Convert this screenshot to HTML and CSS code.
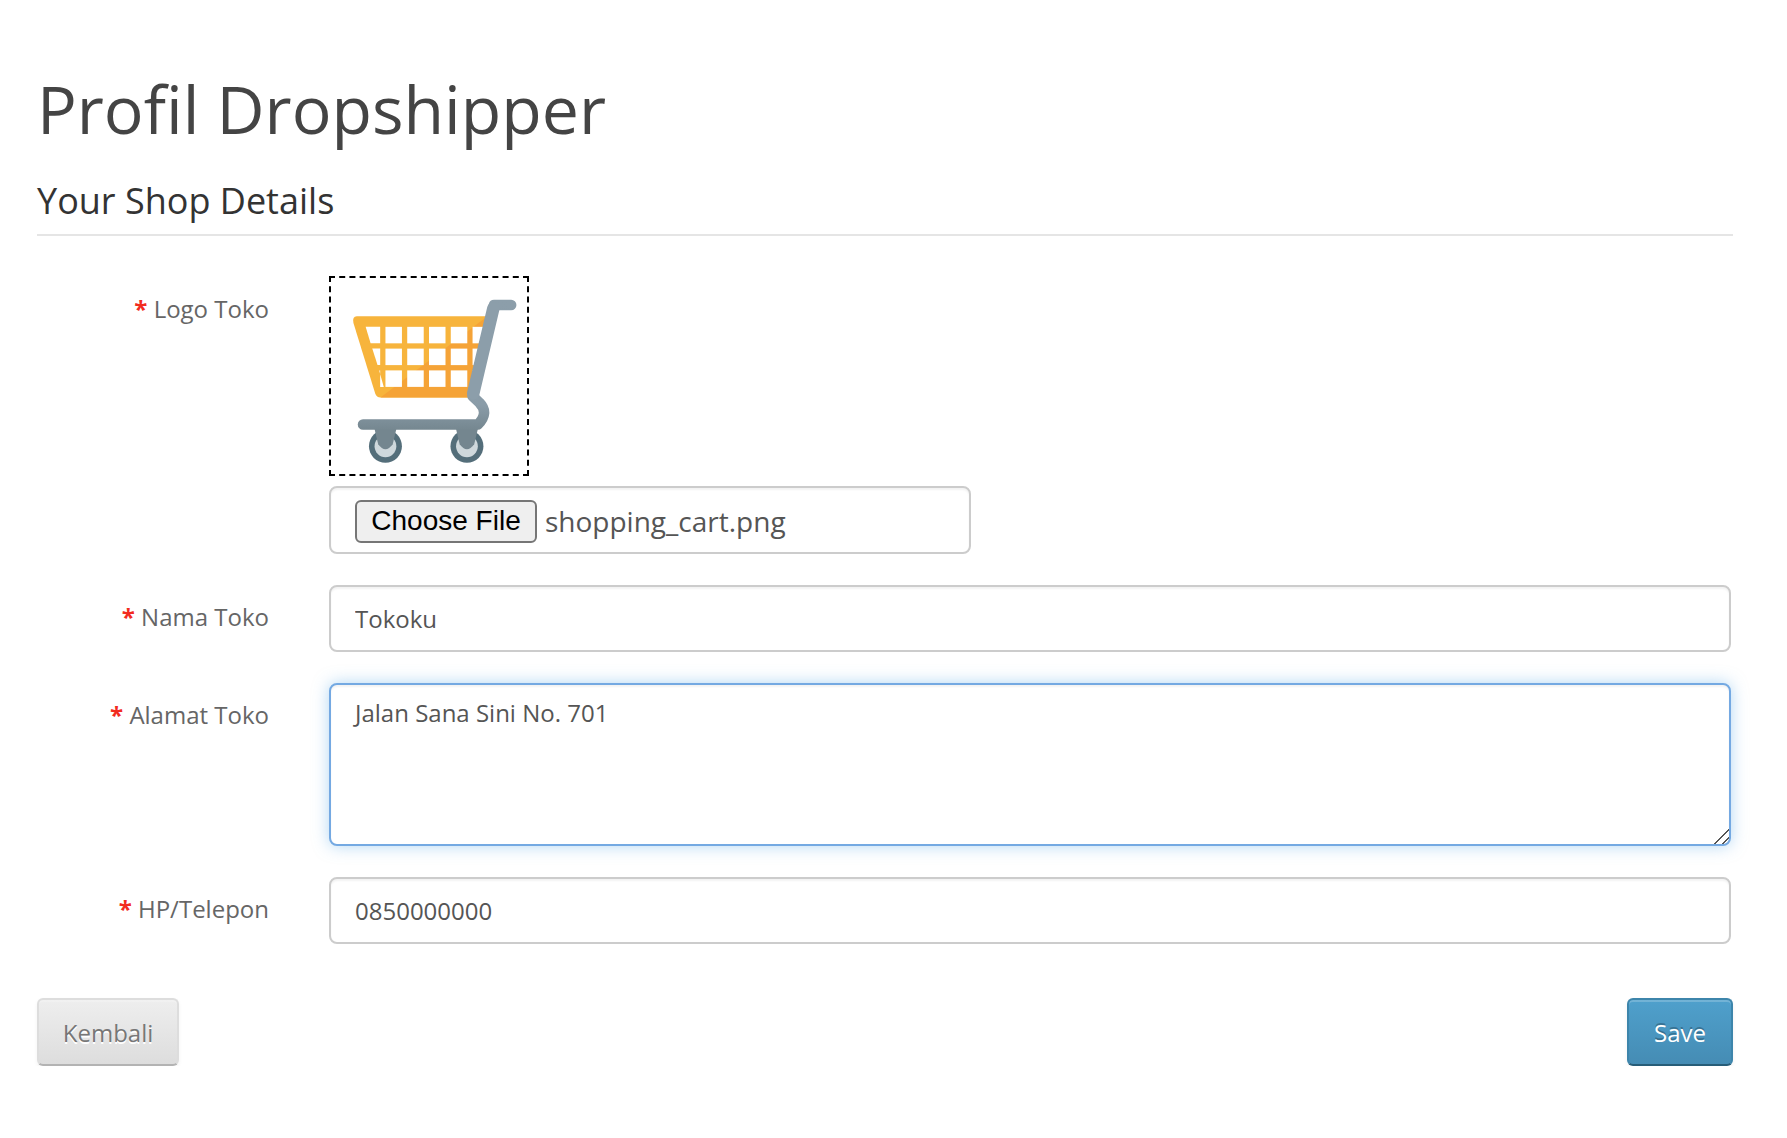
FILE: index.html
```html
<!DOCTYPE html>
<html lang="id">
<head>
<meta charset="utf-8">
<title>Profil Dropshipper</title>
<link rel="stylesheet" href="styles.css">
</head>
<body>
<main class="page">
  <h1 class="title">Profil Dropshipper</h1>
  <form class="form">
    <h2 class="legend">Your Shop Details</h2>
    <div class="row">
      <label class="label"><span class="req">*</span> Logo Toko</label>
      <div class="field logo-field">
        <div class="logo-box">
          <svg class="cart" viewBox="30 36 594 594" aria-hidden="true">
            <defs>
              <linearGradient id="steel" gradientUnits="userSpaceOnUse" x1="0" y1="100" x2="0" y2="500">
                <stop offset="0" stop-color="#8c9eaa"/>
                <stop offset=".8" stop-color="#8a9ca8"/>
                <stop offset="1" stop-color="#74868f"/>
              </linearGradient>
            </defs>
            <path fill="#f7b43c" d="M108 152H505L450 398H180Q168 398 164 386L98 172Q94 152 108 152Z"/>
            <path fill="#f5a337" d="M505 152L450 398H180L480 170Z"/>
            <g fill="#fff">
              <path d="M135 184H179V234H150Z"/>
              <path d="M155 250H179V300H171Z"/>
              <path d="M176 316H179V366H190Z" />
              <rect x="195" y="184" width="50" height="50"/><rect x="261" y="184" width="50" height="50"/><rect x="327" y="184" width="50" height="50"/><rect x="393" y="184" width="50" height="50"/><rect x="459" y="184" width="40" height="50"/>
              <rect x="195" y="250" width="50" height="50"/><rect x="261" y="250" width="50" height="50"/><rect x="327" y="250" width="50" height="50"/><rect x="393" y="250" width="50" height="50"/><rect x="459" y="250" width="30" height="50"/>
              <rect x="195" y="316" width="50" height="50"/><rect x="261" y="316" width="50" height="50"/><rect x="327" y="316" width="50" height="50"/><rect x="393" y="316" width="50" height="50"/><rect x="459" y="316" width="20" height="50"/>
            </g>
            <circle cx="195" cy="546" r="50" fill="#546e7a"/>
            <circle cx="195" cy="546" r="33" fill="#cfd8dc"/>
            <circle cx="442" cy="546" r="50" fill="#546e7a"/>
            <circle cx="442" cy="546" r="33" fill="#cfd8dc"/>
            <path fill="#74868f" d="M160 485H230L217 540Q195 570 173 540Z"/>
            <path fill="#74868f" d="M407 485H477L464 540Q442 570 420 540Z"/>
            <path fill="none" stroke="url(#steel)" stroke-width="32" stroke-linecap="round" stroke-linejoin="round" d="M576 118H524L459 394L480 414Q510 445 475 480H127"/>
            <path fill="none" stroke="#8c9eaa" stroke-width="38" stroke-linecap="round" d="M522 128L461 386"/>
          </svg>
        </div>
        <div class="control file-control">
          <button type="button" class="file-btn">Choose File</button>
          <span class="file-name">shopping_cart.png</span>
        </div>
      </div>
    </div>
    <div class="row">
      <label class="label label-input" for="nama"><span class="req">*</span> Nama Toko</label>
      <div class="field"><input id="nama" class="control text-input" type="text" value="Tokoku"></div>
    </div>
    <div class="row">
      <label class="label label-input" for="alamat"><span class="req">*</span> Alamat Toko</label>
      <div class="field"><textarea id="alamat" class="control text-area">Jalan Sana Sini No. 701</textarea></div>
    </div>
    <div class="row">
      <label class="label label-input" for="hp"><span class="req">*</span> HP/Telepon</label>
      <div class="field"><input id="hp" class="control text-input" type="text" value="0850000000"></div>
    </div>
    <div class="actions">
      <a class="btn btn-default">Kembali</a>
      <button type="button" class="btn btn-primary">Save</button>
    </div>
  </form>
</main>
</body>
</html>
```

FILE: styles.css
```css
* { box-sizing: border-box; }
html, body { margin: 0; background: #fff; }
body {
  font-family: "Open Sans", sans-serif;
  color: #666;
  font-size: 24px;
}
.page { padding: 64px 54px 0 37px; }
.title {
  margin: 0;
  font-size: 66.2px;
  line-height: 88px;
  font-weight: 400;
  color: #444;
}
.legend {
  margin: 25px 0 0;
  height: 59px;
  font-size: 36px;
  line-height: 48px;
  font-weight: 400;
  color: #333;
  border-bottom: 2px solid #e5e5e5;
}
.form { display: flex; flex-direction: column; }
.row { display: flex; margin-top: 31px; padding-right: 2px; }
.row:nth-of-type(1) { margin-top: 40px; }
.label {
  width: 292px;
  flex: none;
  padding-right: 60px;
  text-align: right;
  line-height: 34px;
  color: #666;
}
.row:nth-of-type(1) .label { padding-top: 16px; }
.label-input { padding-top: 15px; }
.req { color: #f22c1f; font-weight: 700; }
.field { flex: 1; min-width: 0; }
.logo-box {
  width: 200px;
  height: 200px;
  border: 2px dashed #000;
  background: #fff;
}
.cart { display: block; width: 196px; height: 196px; }
.control {
  display: block;
  width: 100%;
  font-family: "Open Sans", sans-serif;
  font-size: 24px;
  color: #555;
  background: #fff;
  border: 2px solid #ccc;
  border-radius: 8px;
  outline: none;
  box-shadow: inset 0 2px 2px rgba(0,0,0,.05);
}
.text-input {
  height: 67px;
  padding: 0 24px;
}
.text-area {
  height: 163px;
  padding: 11px 24px;
  line-height: 34px;
  resize: vertical;
  border-color: #74a9e2;
  box-shadow: inset 0 2px 2px rgba(0,0,0,.05), 0 0 16px rgba(102,175,233,.5);
}
.text-area::-webkit-resizer {
  background:
    linear-gradient(135deg, transparent 0 48%, #555 48% 56%, transparent 56% 74%, #555 74% 82%, transparent 82%);
}
.file-control {
  width: 642px;
  height: 68px;
  margin-top: 10px;
  padding: 0 24px;
  display: flex;
  align-items: center;
  gap: 8px;
}
.file-btn {
  width: 182px;
  height: 43px;
  margin-top: 2px;
  padding: 0;
  font-family: "Liberation Sans", sans-serif;
  font-size: 28px;
  color: #000;
  background: #efefef;
  border: 2px solid #767676;
  border-radius: 6px;
}
.file-name { font-size: 28px; line-height: 38px; margin-top: 2px; }
.actions {
  display: flex;
  justify-content: space-between;
  margin-top: 54px;
}
.btn {
  display: flex;
  align-items: center;
  justify-content: center;
  height: 68px;
  font-family: "Open Sans", sans-serif;
  font-size: 24px;
  border-radius: 6px;
  cursor: pointer;
}
.btn-default {
  width: 142px;
  color: #777;
  border: 2px solid #ddd;
  border-bottom-color: #b3b3b3;
  background: linear-gradient(#eee, #ddd);
  text-shadow: 0 2px 0 #fff;
  box-shadow: inset 0 2px 0 rgba(255,255,255,.2), 0 2px 4px rgba(0,0,0,.05);
}
.btn-primary {
  width: 106px;
  color: #fff;
  border: 2px solid #3d85ab;
  border-bottom-color: #275d78;
  background: linear-gradient(#4fa0cc, #458cb4);
  text-shadow: 0 -2px 0 rgba(0,0,0,.25);
  box-shadow: inset 0 2px 0 rgba(255,255,255,.2), 0 2px 4px rgba(0,0,0,.05);
}
```
